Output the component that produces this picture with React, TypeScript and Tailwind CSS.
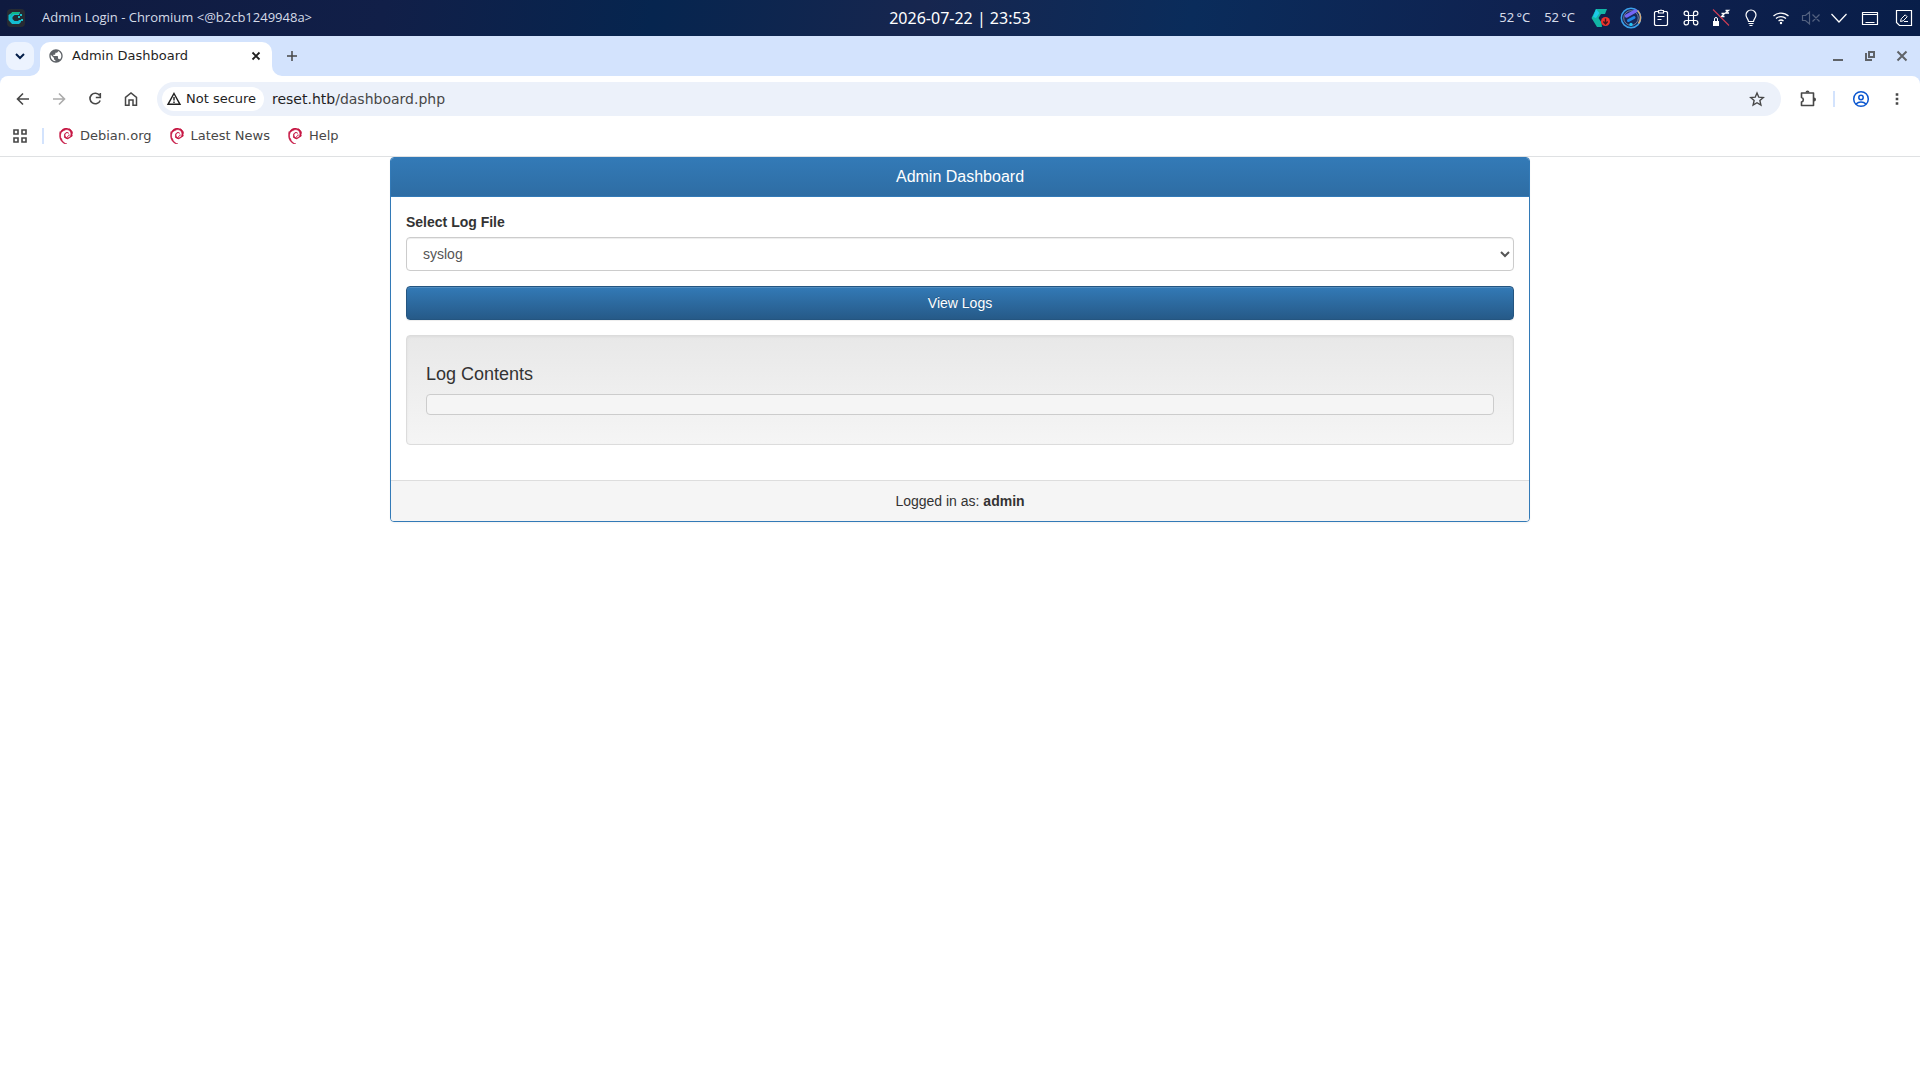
import React from "react";
import { MdPublic } from "react-icons/md";
import { SiDebian } from "react-icons/si";

type IconProps = { children: React.ReactNode; className?: string; w?: number; h?: number };

function Icon({ children, className = "", w = 24, h = 24 }: IconProps) {
  return (
    <svg
      width={w}
      height={h}
      viewBox={`0 0 ${w} ${h}`}
      fill="none"
      stroke="currentColor"
      aria-hidden="true"
      className={`shrink-0 ${className}`}
    >
      {children}
    </svg>
  );
}

function TrayButton({ label, children }: { label: string; children: React.ReactNode }) {
  return (
    <button aria-label={label} className="flex h-9 w-[30px] items-center justify-center">
      {children}
    </button>
  );
}

function Temperature() {
  return <span className="font-['Noto_Sans'] text-[13px] text-[#d5dbe8]">52{"\u2009"}°C</span>;
}

function DesktopBar() {
  return (
    <header className="grid h-9 grid-cols-[1fr_auto_1fr] items-center bg-[linear-gradient(100deg,#0f1a3f_0%,#111f48_20%,#06254f_34%,#17264f_48%,#0a2c5b_62%,#10204e_82%,#081e49_100%)] text-white">
      <div className="flex items-center">
        <Icon w={20} h={20} className="ml-1.5">
          <rect x="1" y="1" width="18" height="18" rx="4" fill="#262b33" stroke="none" />
          <path d="M14 4H7L2.500 7v5L6 16h7l2-2v-2h-2l-1 1H8.500L6.500 11V9L8.500 7H13z" fill="#14bcd0" stroke="none" />
          <path d="M6 4h7v2H7L4 9z" fill="#12b886" stroke="none" />
          <path d="M14 6h2v2h-2zM12 8h2v2h-2zM15 11h2v2h-2z" fill="#1cc0c8" stroke="none" />
        </Icon>
        <span className="ml-4 font-['Open_Sans'] text-[13px] text-[#d5dbe8]">Admin Login - Chromium &lt;@b2cb1249948a&gt;</span>
      </div>
      <time className="font-['Noto_Sans'] text-[16px]">2026-07-22 | 23:53</time>
      <div className="flex items-center justify-end">
        <div className="mr-[11px] flex gap-3.5">
          <Temperature />
          <Temperature />
        </div>
        <TrayButton label="Updates">
          <Icon w={22} h={22}>
            <path d="M6 2h11l-2 5h-4l-2.500 4 3 4.500L12 20H7L1.500 11z" fill="#12b5a5" stroke="none" />
            <path d="M6 2l3.500 4L6 11 3 10z" fill="#1cc8e8" stroke="none" />
            <circle cx="15.500" cy="14.500" r="4.500" fill="#f0322c" stroke="none" />
            <path d="M15.500 11.500v5M13.300 14.500l2.200 2.400 2.200-2.400" stroke="#44151c" strokeWidth="1.400" />
          </Icon>
        </TrayButton>
        <TrayButton label="System monitor">
          <Icon w={22} h={22}>
            <circle cx="11" cy="11" r="9.700" fill="#16295c" stroke="#3aa0ea" strokeWidth="1.500" />
            <path d="M17.500 3.500a9.700 9.700 0 0 1 1 13" stroke="#d9a878" strokeWidth="1.500" />
            <circle cx="11" cy="11" r="7.300" stroke="#8a93a8" strokeWidth=".8" />
            <path d="M6.500 9l9-5" stroke="#7366f5" strokeWidth="3.500" strokeLinecap="round" />
            <path d="M8.500 13.500l5.500-3" stroke="#1f86e6" strokeWidth="3" strokeLinecap="round" />
            <circle cx="11" cy="17.500" r="1.700" fill="#22c3f3" stroke="none" />
          </Icon>
        </TrayButton>
        <TrayButton label="Clipboard">
          <Icon w={20} h={20}>
            <path d="M7 3.500H4.500l-1 1v12l1 1h11l1-1v-12l-1-1H13M7.500 2.500h1.700a1 1 0 0 1 1.600 0h1.700v2.500h-5zM6.500 8.500h7M6.500 11.500h4" strokeWidth="1.200" strokeLinejoin="round" />
          </Icon>
        </TrayButton>
        <TrayButton label="Shortcuts">
          <Icon w={20} h={20}>
            <path d="M7.500 7.500V5.200a2.200 2.200 0 1 0-2.200 2.300h9.400a2.200 2.200 0 1 0-2.200-2.300v9.600a2.200 2.200 0 1 0 2.200-2.300H5.300a2.200 2.200 0 1 0 2.200 2.300z" strokeWidth="1.200" />
          </Icon>
        </TrayButton>
        <TrayButton label="Sleep and lock inhibited">
          <Icon w={20} h={20}>
            <path d="M2 13h6v5H2z" fill="currentColor" stroke="none" />
            <path d="M3.500 13v-2a1.500 1.500 0 0 1 3 0v2" strokeWidth="1" />
            <path d="M10.500 5.500h3l-3 3h3M14.500 2.500h3l-3 2.500h3.500" strokeWidth="1.300" />
            <path d="M2 1.500l16 16" stroke="#d43d54" strokeWidth="1.100" />
          </Icon>
        </TrayButton>
        <TrayButton label="Night light">
          <Icon w={20} h={20}>
            <path d="M7.500 13.500c0-2.500-2.500-3.500-2.500-6.500a5 5 0 0 1 10 0c0 3-2.500 4-2.500 6.500z" strokeWidth="1.200" />
            <path d="M7.500 15.500h5M8.500 17.500h3" strokeWidth="1.200" />
          </Icon>
        </TrayButton>
        <TrayButton label="Wi-Fi">
          <Icon w={20} h={20}>
            <path d="M2.500 8a11 11 0 0 1 15 0M5 10.500a7.500 7.500 0 0 1 10 0M7.500 13a4 4 0 0 1 5 0" strokeWidth="1.300" />
            <circle cx="10" cy="15" r="1.200" fill="currentColor" stroke="none" />
          </Icon>
        </TrayButton>
        <TrayButton label="Volume muted">
          <Icon w={20} h={20} className="text-[#53617f]">
            <path d="M1.500 7.500h3l4-3.500v12l-4-3.500h-3zM11.500 6.500l7 7M18.500 6.500l-7 7" strokeWidth="1.200" />
          </Icon>
        </TrayButton>
        <button aria-label="Show hidden icons" className="flex h-9 w-[26px] items-center justify-center">
          <Icon w={18} h={18}>
            <path d="M1.500 5l7.500 8 7.500-8" strokeWidth="1.200" />
          </Icon>
        </button>
        <button aria-label="Show desktop" className="flex h-9 w-9 items-center justify-center">
          <Icon w={18} h={18}>
            <path d="M1.500 3.500h15v12h-15zM1.500 5.500h15M4.500 13.500h9" strokeWidth="1.200" strokeLinejoin="round" />
          </Icon>
        </button>
        <button aria-label="Edit panel" className="flex h-9 w-8 items-center justify-center">
          <Icon w={18} h={18}>
            <path d="M1.500 1.500h15v15h-12l-3-3z" strokeWidth="1.200" />
            <path d="M5.500 12.500l.7-2.700 4-4 2 2-4 4zM9 12.500h4" strokeWidth="1" />
          </Icon>
        </button>
      </div>
    </header>
  );
}

function TabStrip() {
  return (
    <div className="flex h-10 items-end bg-[#d3e3fd] text-[#1f1f1f]">
      <button aria-label="Search tabs" className="mb-1.5 ml-1.5 flex size-7 items-center justify-center rounded-[9px] bg-[#ecf3fe]">
        <Icon w={14} h={14} className="text-[#041e49]">
          <path d="M3 5l4 4 4-4" strokeWidth="2" />
        </Icon>
      </button>
      <div className="relative ml-1.5 flex h-[34px] w-[232px] items-start rounded-t-[10px] bg-white px-2">
        <Icon w={10} h={10} className="absolute bottom-0 -left-[10px] text-white">
          <path d="M10 0v10H0A10 10 0 0 0 10 0z" fill="currentColor" stroke="none" />
        </Icon>
        <Icon w={10} h={10} className="absolute -right-[10px] bottom-0 text-white">
          <path d="M0 0v10h10A10 10 0 0 1 0 0z" fill="currentColor" stroke="none" />
        </Icon>
        <div className="flex h-7 grow items-center">
          <MdPublic size={16} className="shrink-0 text-[#5f6368]" />
          <span className="ml-2 grow whitespace-nowrap font-['DejaVu_Sans'] text-[13px] leading-4">Admin Dashboard</span>
          <button aria-label="Close tab" className="flex size-4 items-center justify-center">
            <Icon w={16} h={16}>
              <path d="M4.500 4.500l7 7M11.500 4.500l-7 7" strokeWidth="1.800" />
            </Icon>
          </button>
        </div>
      </div>
      <button aria-label="New tab" className="mb-1.5 ml-1.5 flex size-7 items-center justify-center">
        <Icon w={12} h={12} className="text-[#474747]">
          <path d="M6 1v10M1 6h10" strokeWidth="1.500" />
        </Icon>
      </button>
      <div className="mr-0.5 mb-1 ml-auto flex h-8 items-center text-[#5f6368]">
        <button aria-label="Minimize" className="flex h-8 w-8 items-center justify-center">
          <Icon w={12} h={12}><path d="M1 10h10" strokeWidth="2" /></Icon>
        </button>
        <button aria-label="Restore" className="flex h-8 w-8 items-center justify-center">
          <Icon w={12} h={12}>
            <path d="M5 2h5v5H5zM2 3v7h6" strokeWidth="2" />
          </Icon>
        </button>
        <button aria-label="Close window" className="flex h-8 w-8 items-center justify-center">
          <Icon w={12} h={12}><path d="M1.500 1.500l9 9M10.500 1.500l-9 9" strokeWidth="2" /></Icon>
        </button>
      </div>
    </div>
  );
}

function ToolButton({ label, className = "", children }: { label: string; className?: string; children: React.ReactNode }) {
  return (
    <button aria-label={label} className={`flex h-[34px] w-9 shrink-0 items-center justify-center text-[#474747] ${className}`}>
      {children}
    </button>
  );
}

function Toolbar() {
  return (
    <div className="bg-[#d3e3fd]">
      <div className="flex items-center rounded-t-lg bg-white px-[5px] pt-1.5">
        <ToolButton label="Back">
          <Icon w={16} h={16}><path d="M14 8H3M8 2.500L2.500 8 8 13.500" strokeWidth="1.600" /></Icon>
        </ToolButton>
        <ToolButton label="Forward" className="opacity-45">
          <Icon w={16} h={16}><path d="M2 8h11M8 2.500L13.500 8 8 13.500" strokeWidth="1.600" /></Icon>
        </ToolButton>
        <ToolButton label="Reload">
          <Icon w={16} h={16}><path d="M12.600 4.400A5.300 5.300 0 1 0 13.200 9.500M13.300 2v4.500H8.800" strokeWidth="1.600" /></Icon>
        </ToolButton>
        <ToolButton label="Home">
          <Icon w={16} h={16}><path d="M2.500 6.300L8 2l5.500 4.300V14.300H10V9H6v5.300H2.500z" strokeWidth="1.500" /></Icon>
        </ToolButton>
        <div className="ml-2 flex h-[34px] grow items-center rounded-full bg-[#ecf1fa] pl-[5px]">
          <button className="flex h-6 w-[102px] items-center whitespace-nowrap rounded-full bg-white pl-1 font-['DejaVu_Sans'] text-[13px] text-[#1f1f1f]">
            <Icon w={16} h={16} className="mr-1">
              <path d="M8 2.500L14 13.300H2z" strokeWidth="1.400" />
              <path d="M8 6v3.500M8 10.500V12" strokeWidth="1.400" />
            </Icon>
            Not secure
          </button>
          <span className="ml-2 grow font-['DejaVu_Sans'] text-[14px] text-[#474747]">
            <span className="text-[#1f1f1f]">reset.htb</span>/dashboard.php
          </span>
          <button aria-label="Bookmark this page" className="mr-4 flex size-4 items-center justify-center text-[#474747]">
            <Icon w={16} h={16}>
              <path d="M8 2l1.800 4.200 4.500.4-3.400 3 1 4.400L8 11.700 4.100 14l1-4.400-3.400-3 4.500-.4z" strokeWidth="1.400" />
            </Icon>
          </button>
        </div>
        <ToolButton label="Extensions" className="ml-[9px]">
          <Icon w={18} h={18}>
            <path d="M2.500 3H14.500V15.500H2.500V12a2.300 2.300 0 0 0 0-4.500z" strokeWidth="1.600" strokeLinejoin="round" />
            <path d="M6.500 2.500a2 2 0 0 1 4 0zM15 7.500a2 2 0 0 1 0 4z" fill="currentColor" stroke="none" />
          </Icon>
        </ToolButton>
        <div className="ml-[7px] h-4 w-0.5 bg-[#d3e3fd]" />
        <ToolButton label="Profile" className="ml-2">
          <Icon w={18} h={18} className="text-[#0b57d0]">
            <circle cx="9" cy="9" r="7.300" strokeWidth="1.500" />
            <circle cx="9" cy="7.500" r="2.200" strokeWidth="1.500" />
            <path d="M4 14a7 7 0 0 1 10 0" strokeWidth="1.500" />
          </Icon>
        </ToolButton>
        <ToolButton label="Menu">
          <Icon w={16} h={16}>
            <path d="M6.700 2.200h2.600v2.600H6.700zM6.700 6.700h2.600v2.600H6.700zM6.700 11.200h2.600v2.600H6.700z" fill="currentColor" stroke="none" />
          </Icon>
        </ToolButton>
      </div>
    </div>
  );
}

function Bookmark({ label }: { label: string }) {
  return (
    <a href="#" className="flex h-7 items-center whitespace-nowrap">
      <SiDebian size={16} className="mr-1.5 shrink-0 stroke-[#c4103e] stroke-1 text-[#c4103e]" />
      {label}
    </a>
  );
}

function BookmarksBar() {
  return (
    <nav aria-label="Bookmarks" className="flex h-[41px] items-center border-b border-[#dfe1e3] bg-white pb-px font-['DejaVu_Sans'] text-[13px] text-[#474747]">
      <button aria-label="Apps" className="ml-3 flex size-4 items-center justify-center">
        <Icon w={16} h={16}>
          <path d="M2 2h4v4H2zM10 2h4v4h-4zM2 10h4v4H2zM10 10h4v4h-4z" strokeWidth="1.600" />
        </Icon>
      </button>
      <div className="mx-3.5 h-4 w-0.5 bg-[#d3e3fd]" />
      <div className="flex items-center gap-[17px]">
        <Bookmark label="Debian.org" />
        <Bookmark label="Latest News" />
        <Bookmark label="Help" />
      </div>
    </nav>
  );
}

function Dashboard() {
  return (
    <main className="mx-auto w-full max-w-[1140px] font-['Liberation_Sans'] text-[14px] leading-5 text-[#333]">
      <section className="overflow-hidden rounded border border-[#337ab7] bg-white shadow-[0_1px_2px_rgba(0,0,0,0.05)]">
        <div className="border-b border-[#337ab7] bg-linear-to-b from-[#337ab7] to-[#2e6da4] py-2.5 text-center text-white">
          <h1 className="text-[16px] leading-[18px]">Admin Dashboard</h1>
        </div>
        <div className="px-[15px] pt-[15px] pb-[35px]">
          <form onSubmit={(e) => e.preventDefault()}>
            <label htmlFor="log" className="mb-[5px] block font-bold">Select Log File</label>
            <select
              id="log"
              className="mb-[15px] block h-[34px] w-full rounded border border-[#ccc] bg-white px-3 py-1.5 text-[14px] text-[#555] shadow-[inset_0_1px_1px_rgba(0,0,0,0.075)]"
            >
              <option>syslog</option>
              <option>auth.log</option>
            </select>
            <button
              type="submit"
              className="block h-[34px] w-full rounded border border-[#245580] bg-linear-to-b from-[#337ab7] to-[#265a88] text-center text-white shadow-[inset_0_1px_0_rgba(255,255,255,0.15),0_1px_1px_rgba(0,0,0,0.075)] [text-shadow:0_-1px_0_rgba(0,0,0,0.2)]"
            >
              View Logs
            </button>
          </form>
          <div className="mt-[15px] rounded border border-[#dcdcdc] bg-linear-to-b from-[#e8e8e8] to-[#f5f5f5] px-[19px] pt-7 pb-[29px] shadow-[inset_0_1px_3px_rgba(0,0,0,0.05),0_1px_0_rgba(255,255,255,0.1)]">
            <h2 className="mb-2.5 text-[18px] leading-5">Log Contents</h2>
            <pre className="h-[21px] rounded border border-[#ccc] bg-[#f5f5f5]" />
          </div>
        </div>
        <footer className="border-t border-[#ddd] bg-[#f5f5f5] py-2.5 text-center">
          Logged in as: <strong>admin</strong>
        </footer>
      </section>
    </main>
  );
}

export default function App() {
  return (
    <div className="min-h-screen bg-white">
      <DesktopBar />
      <TabStrip />
      <Toolbar />
      <BookmarksBar />
      <Dashboard />
    </div>
  );
}
